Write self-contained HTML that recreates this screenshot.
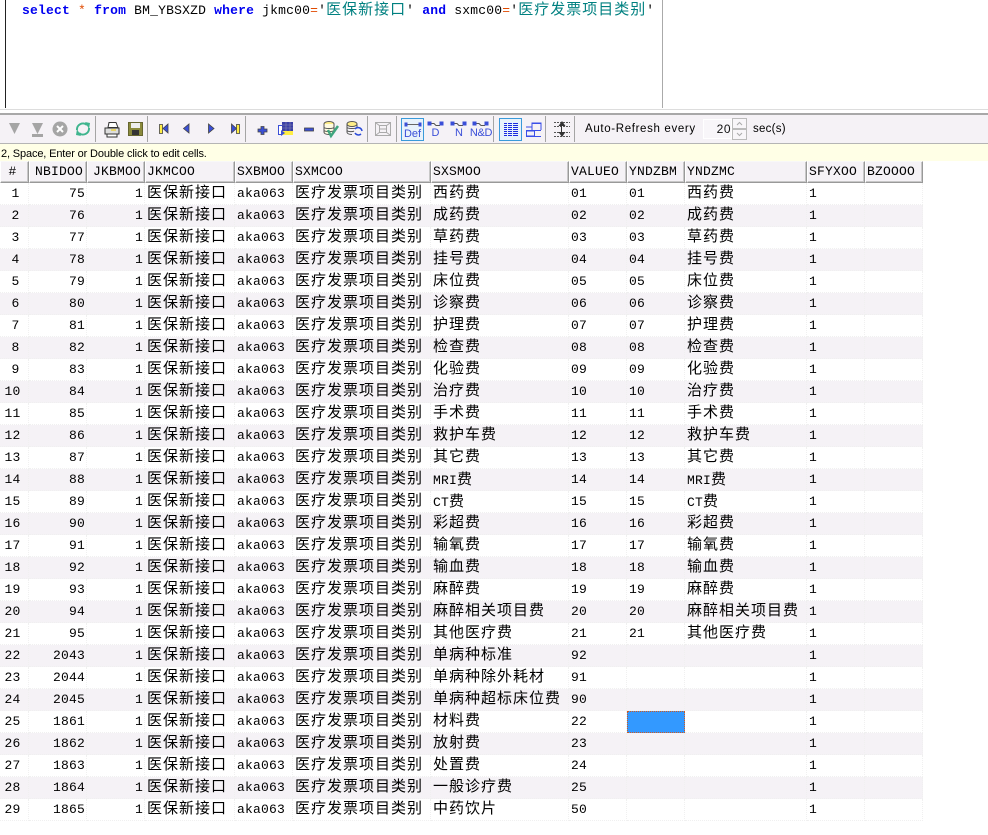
<!DOCTYPE html>
<html><head><meta charset="utf-8"><style>
html,body{margin:0;padding:0;width:988px;height:835px;overflow:hidden;background:#fff;position:relative}
div,svg,table{position:absolute}
.m{font-family:"Liberation Mono",monospace;font-size:13px;letter-spacing:.2px}
#sql{left:22px;top:2px;margin:0;line-height:18px;white-space:pre;color:#000;position:absolute}
#sql b{color:#0000f0}#sql i{font-style:normal;color:#e04a00}#sql u{text-decoration:none;color:#008080;font-family:"WenQuanYi Zen Hei","Noto Sans CJK SC",sans-serif;font-size:15px;letter-spacing:1px;line-height:10px}
table{left:0;top:161px;border-collapse:separate;border-spacing:0;table-layout:fixed;width:923px;font-family:"Liberation Mono",monospace;font-size:13px;letter-spacing:.2px;color:#000;line-height:16px}
th{padding:0 0 0 1px;font-weight:400;text-align:left;background:#f5f2f6;border-top:1px solid #f8f8f8;border-left:1px solid #fff;border-right:1px solid #999;border-bottom:1px solid #999;box-sizing:border-box;height:22px;box-shadow:inset -1px -1px 0 #c8c8c8;overflow:hidden;white-space:nowrap}
td{height:22px;padding:0 0 0 2px;box-sizing:border-box;border-right:1px dotted #f0f0f0;border-bottom:1px dotted #f0f0f0;white-space:nowrap;overflow:hidden}
tr:nth-child(odd) td{background:#f5f2f6}
tr.h th{background:#f5f2f6}
td.r{text-align:right;padding-right:1px}
td.n{text-align:center;padding:0 3px 0 0}
tr:nth-child(-n+10) td.n{padding:0 0 0 3px}
td.c,b.c{font-family:"WenQuanYi Zen Hei","Noto Sans CJK SC",sans-serif;font-size:15px;letter-spacing:1px;font-weight:400;line-height:16px}
td.c{padding-bottom:4px}
td.s{background:#3399ff!important;outline:1px dotted #d05a20;outline-offset:-1px}
</style></head><body>
<div style="left:5px;top:0;width:1px;height:108px;background:#222"></div>
<div style="left:662px;top:0;width:1px;height:108px;background:#aaa"></div>
<div style="left:0;top:109px;width:988px;height:1px;background:#ddd"></div>
<pre id="sql" class="m"><b>select</b> <i>*</i> <b>from</b> BM_YBSXZD <b>where</b> jkmc00<i>=</i>'<u>医保新接口</u>' <b>and</b> sxmc00<i>=</i>'<u>医疗发票项目类别</u>'</pre>
<div style="left:0;top:113px;width:988px;height:2px;background:#a8a8a8"></div>
<div style="left:0;top:115px;width:988px;height:28px;background:#f5f2f6"></div>
<div style="left:0;top:143px;width:988px;height:1px;background:#b5b5b5"></div>
<div style="left:0;top:144px;width:988px;height:17px;background:#ffffe6"></div>
<div style="left:1px;top:147px;font:11px/14px 'Liberation Sans',sans-serif;color:#000;letter-spacing:-.14px;white-space:nowrap">2, Space, Enter or Double click to edit cells.</div>
<div style="left:585px;top:122px;font:11.5px/15px 'Liberation Sans',sans-serif;color:#000;letter-spacing:.65px;white-space:nowrap">Auto-Refresh every</div>
<div style="left:703px;top:119px;width:29px;height:20px;background:#f8f6f9;border:1px solid #fff;box-sizing:border-box;font:12px/18px 'Liberation Sans',sans-serif;text-align:right;padding-right:0;letter-spacing:.5px;color:#111">20</div>
<div style="left:753px;top:122px;font:11.5px/15px 'Liberation Sans',sans-serif;color:#000;letter-spacing:.25px;white-space:nowrap">sec(s)</div>
<svg style="left:0;top:112px" width="988" height="32" viewBox="0 112 988 32" font-family="Liberation Sans">
<g fill="#a5a5a5">
<rect x="95" y="116" width="1" height="26"/><rect x="147" y="116" width="1" height="26"/><rect x="245" y="116" width="1" height="26"/><rect x="367" y="116" width="1" height="26"/><rect x="396" y="116" width="1" height="26"/><rect x="493" y="116" width="1" height="26"/><rect x="545" y="116" width="1" height="26"/><rect x="574" y="116" width="1" height="26"/>
<path d="M9 123h11l-5.500 11z"/><path d="M32 123h11l-5.500 11z"/><rect x="32" y="134" width="11" height="3"/>
<circle cx="60" cy="129" r="7.500"/></g>
<path d="M57 126l6 6M63 126l-6 6" stroke="#fff" stroke-width="2"/>
<g fill="none" stroke="#3fb58e" stroke-width="2"><path d="M77 130a6 6 0 0 1 10-5"/><path d="M89 128a6 6 0 0 1-10 5"/></g>
<path d="M85 122l5 1-1 6zM81 136l-5-1 1-6z" fill="#3fb58e"/>
<path d="M109 122.500h7l2 5h-10z" fill="#fff" stroke="#333"/><path d="M105 128h14v6h-14z" fill="#ddd" stroke="#333"/><path d="M107 134h10v3h-10z" fill="#fff" stroke="#333"/><path d="M111 130h5" stroke="#e8d040" stroke-width="1.500"/>
<path d="M128.500 122.500h14v13h-14z" fill="#8a8a3c" stroke="#666630"/><rect x="131" y="123" width="9" height="5" fill="#eee"/><rect x="132" y="130" width="7" height="5" fill="#333"/>
<g stroke="#444" stroke-width=".8" fill="#3a4fd8"><rect x="159.500" y="124.500" width="3" height="9" fill="#ffee44"/><path d="M168 124v9l-5-4.500z"/><path d="M189 124v9l-5.500-4.500z"/><path d="M208.500 124v9l5.500-4.500z"/><path d="M231.500 124v9l5-4.500z"/><rect x="236.500" y="124.500" width="3" height="9" fill="#ffee44"/>
<path d="M261 126.500h3v2.500h3v3h-3v2.500h-3v-2.500h-3v-3h3z"/><rect x="304.500" y="128" width="9" height="3"/></g>
<rect x="278.500" y="125.500" width="8" height="9" fill="#fff" stroke="#3a4fd8"/><rect x="282" y="122" width="11" height="9" fill="#3a3fa8"/><path d="M282 125h11M282 128h11M286 122v9M290 122v9" stroke="#88a" stroke-width=".6"/><rect x="282" y="131" width="11" height="4" fill="#ffee44"/><path d="M281 130v6l4-3z" fill="#3a4fd8"/>
<g><ellipse cx="329" cy="124" rx="5" ry="2.500" fill="#ffee88" stroke="#555"/><path d="M324 124v8c0 1.500 2 2.500 5 2.500s5-1 5-2.500v-8M324 127c0 2 10 2 10 0M324 130c0 2 10 2 10 0" fill="#fffbe0" stroke="#555"/><path d="M328 130l3 6 7-10" fill="none" stroke="#3fa57e" stroke-width="2.500"/></g>
<g><ellipse cx="352" cy="124" rx="5" ry="2.500" fill="#ffee88" stroke="#555"/><path d="M347 124v8c0 1.500 2 2.500 5 2.500M357 124v3M347 127c0 2 10 2 10 0M347 130c0 2 6 2 7 1" fill="none" stroke="#555"/><path d="M355 129a4 4 0 0 1 7 2M361 134a4 4 0 0 1-6-1" fill="none" stroke="#2a4ad8" stroke-width="1.500"/></g>
<g fill="none" stroke="#aaa"><rect x="375.500" y="122.500" width="15" height="13"/><rect x="379.500" y="125.500" width="7" height="7"/><path d="M376 123l4 3M390 123l-4 3M376 135l4-3M390 135l-4-3M380 129h6" /></g>
<rect x="401.500" y="118.500" width="22" height="22" fill="#e8f2fb" stroke="#3a9ad9"/><rect x="499.500" y="118.500" width="22" height="22" fill="#e8f2fb" stroke="#3a9ad9"/>
<g stroke="#3a4fd8" fill="#3a4fd8" stroke-width="1">
<path d="M406 124.500h14" stroke="#666"/><rect x="405" y="123" width="2" height="3"/><rect x="419" y="123" width="2" height="3"/>
<path d="M430 123.500h4l2 2h4" fill="none" stroke="#555"/><rect x="428" y="122" width="3" height="3"/><rect x="440" y="122" width="3" height="3"/>
<path d="M453 123.500h4l2 2h4" fill="none" stroke="#555"/><rect x="451" y="122" width="3" height="3"/><rect x="463" y="122" width="3" height="3"/>
<path d="M475 123.500h4l2 2h4" fill="none" stroke="#555"/><rect x="473" y="122" width="3" height="3"/><rect x="485" y="122" width="3" height="3"/>
</g>
<g font-size="11" fill="#3a4fd8" text-anchor="middle"><text x="412.500" y="137">Def</text><text x="435.500" y="136">D</text><text x="459" y="136">N</text><text x="481" y="136" letter-spacing="-.3">N&amp;D</text></g>
<path d="M504 123.500h14M504 125.500h14M504 127.500h14M504 129.500h14M504 131.500h14M504 133.500h14M504 135.500h14" stroke="#1a2ae0"/><path d="M507.500 123v13M512.500 123v13" stroke="#e8f2fb"/>
<path d="M526 130.500h15M526 136.500h15M532 130v-7h9v7M526 127h6M532 123.500h9" fill="none" stroke="#3a4fe8"/><rect x="526.500" y="131" width="8" height="5" fill="none" stroke="#3a4fe8"/>
<path d="M554 122.500h16M554 126.500h16M554 132.500h16M554 136.500h16" stroke="#555" stroke-dasharray="2 1"/><path d="M562 121l-3.500 5h7zM562 137l-3.500-5h7z" fill="#333"/><path d="M561.500 125v8" stroke="#333"/>
<rect x="732.500" y="118.500" width="14" height="10" fill="#f8f6f9" stroke="#bbb"/><rect x="732.500" y="129.500" width="14" height="10" fill="#f8f6f9" stroke="#bbb"/><path d="M737 125l2.500-2.500 2.500 2.500M737 133l2.500 2.500 2.500-2.500" fill="none" stroke="#aaa"/>
</svg>
<table><colgroup><col style="width:29px"><col style="width:58px"><col style="width:58px"><col style="width:90px"><col style="width:58px"><col style="width:138px"><col style="width:138px"><col style="width:58px"><col style="width:58px"><col style="width:122px"><col style="width:58px"><col style="width:58px"></colgroup>
<tr class="h"><th style="text-align:center;padding:0 4px 0 0">#</th><th style="padding-left:5px">NBIDOO</th><th style="padding-left:5px">JKBMOO</th><th>JKMCOO</th><th>SXBMOO</th><th>SXMCOO</th><th>SXSMOO</th><th>VALUEO</th><th>YNDZBM</th><th>YNDZMC</th><th>SFYXOO</th><th>BZOOOO</th></tr>
<tr><td class="n">1</td><td class="r">75</td><td class="r">1</td><td class="c">医保新接口</td><td>aka063</td><td class="c">医疗发票项目类别</td><td class="c">西药费</td><td>01</td><td>01</td><td class="c">西药费</td><td>1</td><td></td></tr>
<tr><td class="n">2</td><td class="r">76</td><td class="r">1</td><td class="c">医保新接口</td><td>aka063</td><td class="c">医疗发票项目类别</td><td class="c">成药费</td><td>02</td><td>02</td><td class="c">成药费</td><td>1</td><td></td></tr>
<tr><td class="n">3</td><td class="r">77</td><td class="r">1</td><td class="c">医保新接口</td><td>aka063</td><td class="c">医疗发票项目类别</td><td class="c">草药费</td><td>03</td><td>03</td><td class="c">草药费</td><td>1</td><td></td></tr>
<tr><td class="n">4</td><td class="r">78</td><td class="r">1</td><td class="c">医保新接口</td><td>aka063</td><td class="c">医疗发票项目类别</td><td class="c">挂号费</td><td>04</td><td>04</td><td class="c">挂号费</td><td>1</td><td></td></tr>
<tr><td class="n">5</td><td class="r">79</td><td class="r">1</td><td class="c">医保新接口</td><td>aka063</td><td class="c">医疗发票项目类别</td><td class="c">床位费</td><td>05</td><td>05</td><td class="c">床位费</td><td>1</td><td></td></tr>
<tr><td class="n">6</td><td class="r">80</td><td class="r">1</td><td class="c">医保新接口</td><td>aka063</td><td class="c">医疗发票项目类别</td><td class="c">诊察费</td><td>06</td><td>06</td><td class="c">诊察费</td><td>1</td><td></td></tr>
<tr><td class="n">7</td><td class="r">81</td><td class="r">1</td><td class="c">医保新接口</td><td>aka063</td><td class="c">医疗发票项目类别</td><td class="c">护理费</td><td>07</td><td>07</td><td class="c">护理费</td><td>1</td><td></td></tr>
<tr><td class="n">8</td><td class="r">82</td><td class="r">1</td><td class="c">医保新接口</td><td>aka063</td><td class="c">医疗发票项目类别</td><td class="c">检查费</td><td>08</td><td>08</td><td class="c">检查费</td><td>1</td><td></td></tr>
<tr><td class="n">9</td><td class="r">83</td><td class="r">1</td><td class="c">医保新接口</td><td>aka063</td><td class="c">医疗发票项目类别</td><td class="c">化验费</td><td>09</td><td>09</td><td class="c">化验费</td><td>1</td><td></td></tr>
<tr><td class="n">10</td><td class="r">84</td><td class="r">1</td><td class="c">医保新接口</td><td>aka063</td><td class="c">医疗发票项目类别</td><td class="c">治疗费</td><td>10</td><td>10</td><td class="c">治疗费</td><td>1</td><td></td></tr>
<tr><td class="n">11</td><td class="r">85</td><td class="r">1</td><td class="c">医保新接口</td><td>aka063</td><td class="c">医疗发票项目类别</td><td class="c">手术费</td><td>11</td><td>11</td><td class="c">手术费</td><td>1</td><td></td></tr>
<tr><td class="n">12</td><td class="r">86</td><td class="r">1</td><td class="c">医保新接口</td><td>aka063</td><td class="c">医疗发票项目类别</td><td class="c">救护车费</td><td>12</td><td>12</td><td class="c">救护车费</td><td>1</td><td></td></tr>
<tr><td class="n">13</td><td class="r">87</td><td class="r">1</td><td class="c">医保新接口</td><td>aka063</td><td class="c">医疗发票项目类别</td><td class="c">其它费</td><td>13</td><td>13</td><td class="c">其它费</td><td>1</td><td></td></tr>
<tr><td class="n">14</td><td class="r">88</td><td class="r">1</td><td class="c">医保新接口</td><td>aka063</td><td class="c">医疗发票项目类别</td><td>MRI<b class="c">费</b></td><td>14</td><td>14</td><td>MRI<b class="c">费</b></td><td>1</td><td></td></tr>
<tr><td class="n">15</td><td class="r">89</td><td class="r">1</td><td class="c">医保新接口</td><td>aka063</td><td class="c">医疗发票项目类别</td><td>CT<b class="c">费</b></td><td>15</td><td>15</td><td>CT<b class="c">费</b></td><td>1</td><td></td></tr>
<tr><td class="n">16</td><td class="r">90</td><td class="r">1</td><td class="c">医保新接口</td><td>aka063</td><td class="c">医疗发票项目类别</td><td class="c">彩超费</td><td>16</td><td>16</td><td class="c">彩超费</td><td>1</td><td></td></tr>
<tr><td class="n">17</td><td class="r">91</td><td class="r">1</td><td class="c">医保新接口</td><td>aka063</td><td class="c">医疗发票项目类别</td><td class="c">输氧费</td><td>17</td><td>17</td><td class="c">输氧费</td><td>1</td><td></td></tr>
<tr><td class="n">18</td><td class="r">92</td><td class="r">1</td><td class="c">医保新接口</td><td>aka063</td><td class="c">医疗发票项目类别</td><td class="c">输血费</td><td>18</td><td>18</td><td class="c">输血费</td><td>1</td><td></td></tr>
<tr><td class="n">19</td><td class="r">93</td><td class="r">1</td><td class="c">医保新接口</td><td>aka063</td><td class="c">医疗发票项目类别</td><td class="c">麻醉费</td><td>19</td><td>19</td><td class="c">麻醉费</td><td>1</td><td></td></tr>
<tr><td class="n">20</td><td class="r">94</td><td class="r">1</td><td class="c">医保新接口</td><td>aka063</td><td class="c">医疗发票项目类别</td><td class="c">麻醉相关项目费</td><td>20</td><td>20</td><td class="c">麻醉相关项目费</td><td>1</td><td></td></tr>
<tr><td class="n">21</td><td class="r">95</td><td class="r">1</td><td class="c">医保新接口</td><td>aka063</td><td class="c">医疗发票项目类别</td><td class="c">其他医疗费</td><td>21</td><td>21</td><td class="c">其他医疗费</td><td>1</td><td></td></tr>
<tr><td class="n">22</td><td class="r">2043</td><td class="r">1</td><td class="c">医保新接口</td><td>aka063</td><td class="c">医疗发票项目类别</td><td class="c">单病种标准</td><td>92</td><td></td><td></td><td>1</td><td></td></tr>
<tr><td class="n">23</td><td class="r">2044</td><td class="r">1</td><td class="c">医保新接口</td><td>aka063</td><td class="c">医疗发票项目类别</td><td class="c">单病种除外耗材</td><td>91</td><td></td><td></td><td>1</td><td></td></tr>
<tr><td class="n">24</td><td class="r">2045</td><td class="r">1</td><td class="c">医保新接口</td><td>aka063</td><td class="c">医疗发票项目类别</td><td class="c">单病种超标床位费</td><td>90</td><td></td><td></td><td>1</td><td></td></tr>
<tr><td class="n">25</td><td class="r">1861</td><td class="r">1</td><td class="c">医保新接口</td><td>aka063</td><td class="c">医疗发票项目类别</td><td class="c">材料费</td><td>22</td><td class="s"></td><td></td><td>1</td><td></td></tr>
<tr><td class="n">26</td><td class="r">1862</td><td class="r">1</td><td class="c">医保新接口</td><td>aka063</td><td class="c">医疗发票项目类别</td><td class="c">放射费</td><td>23</td><td></td><td></td><td>1</td><td></td></tr>
<tr><td class="n">27</td><td class="r">1863</td><td class="r">1</td><td class="c">医保新接口</td><td>aka063</td><td class="c">医疗发票项目类别</td><td class="c">处置费</td><td>24</td><td></td><td></td><td>1</td><td></td></tr>
<tr><td class="n">28</td><td class="r">1864</td><td class="r">1</td><td class="c">医保新接口</td><td>aka063</td><td class="c">医疗发票项目类别</td><td class="c">一般诊疗费</td><td>25</td><td></td><td></td><td>1</td><td></td></tr>
<tr><td class="n">29</td><td class="r">1865</td><td class="r">1</td><td class="c">医保新接口</td><td>aka063</td><td class="c">医疗发票项目类别</td><td class="c">中药饮片</td><td>50</td><td></td><td></td><td>1</td><td></td></tr>
</table>
</body></html>
